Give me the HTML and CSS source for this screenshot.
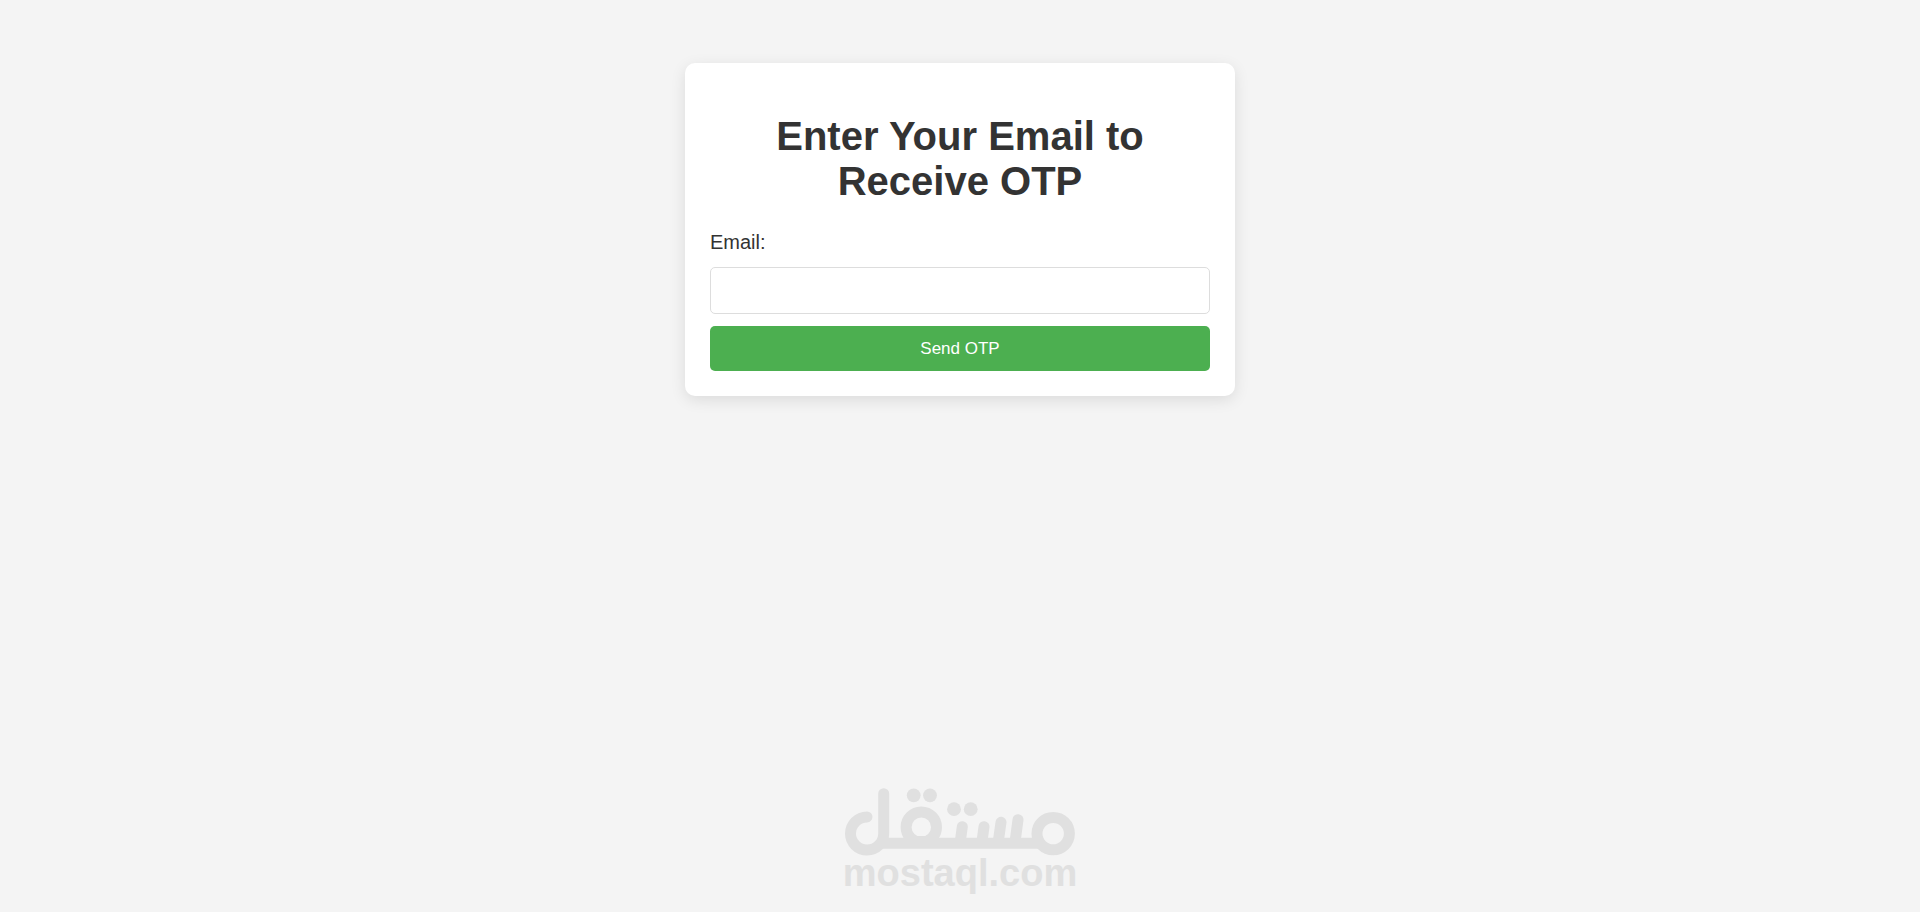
FILE: index.html
```html
<!DOCTYPE html>
<html lang="en">
  <head>
    <meta charset="UTF-8" />
    <meta name="viewport" content="width=device-width, initial-scale=1.0" />
    <title>Send OTP</title>
    <link rel="stylesheet" href="styles.css">
  </head>
  <body>
    <main class="container">
      <h1>Enter Your Email to Receive OTP</h1>
      <form class="otp-form" method="post">
        <label for="email">Email:</label>
        <input type="email" id="email" name="email" required />
        <button type="submit">Send OTP</button>
      </form>
    </main>

    <footer class="brand">
      <svg class="brand-logo" viewBox="0 0 240 114" role="img" aria-label="mostaql.com">
        <g class="logo-strokes">
          <path d="M27 36.900 A16.600 16.600 0 1 0 43.700 53.500 V13.700" />
          <path class="flat" d="M43 63.300 H202" />
          <circle cx="81.300" cy="47.200" r="15.200" />
          <path d="M122.300 46.700 L120.500 60 M144 46.700 L142.200 60 M161 42.300 L158.500 60 M178 39.700 L175.300 60" />
          <circle cx="213.200" cy="53.600" r="16.200" />
        </g>
        <g class="logo-fill">
          <path d="M61 47 L64 58 H98.500 L101.500 47 L93 56 H69 Z" />
          <circle cx="73.700" cy="15.300" r="6.900" />
          <circle cx="90" cy="15.300" r="6.900" />
          <circle cx="114" cy="29.200" r="6.900" />
          <circle cx="130.700" cy="29.200" r="6.900" />
          <text x="120" y="106" text-anchor="middle">mostaql.com</text>
        </g>
      </svg>
    </footer>
  </body>
</html>
```

FILE: styles.css
```css
* {
  box-sizing: border-box;
}

body {
  margin: 0;
  min-height: 100vh;
  display: flex;
  flex-direction: column;
  align-items: center;
  padding: 63px 20px 18px;
  font-family: Arial, "Liberation Sans", sans-serif;
  background-color: #f4f4f4;
  color: #333;
}

.container {
  width: 100%;
  max-width: 550px;
  padding: 25px;
  background-color: #fff;
  border-radius: 10px;
  box-shadow: 0 4px 15px rgba(0, 0, 0, 0.1);
}

h1 {
  margin: 26px 0;
  font-size: 40px;
  line-height: 45px;
  text-align: center;
}

/* Form */
.otp-form {
  display: flex;
  flex-direction: column;
}

label {
  margin-bottom: 12px;
  font-size: 20px;
  line-height: 25px;
}

input {
  width: 100%;
  height: 47px;
  margin-bottom: 12px;
  padding: 12px;
  border: 1px solid #ddd;
  border-radius: 5px;
  font-family: inherit;
  font-size: 17px;
}

button {
  height: 45px;
  padding: 12px;
  border: none;
  border-radius: 5px;
  background-color: #4caf50;
  color: #fff;
  font-family: inherit;
  font-size: 17px;
  line-height: 20px;
  cursor: pointer;
}

button:hover {
  background-color: #45a049;
}

/* Brand mark */
.brand {
  margin-top: auto;
}

.brand-logo {
  display: block;
  width: 240px;
}

.logo-strokes {
  fill: none;
  stroke: #e0e0e0;
  stroke-width: 11;
  stroke-linecap: round;
}

.logo-strokes .flat {
  stroke-linecap: butt;
}

.logo-fill {
  fill: #e0e0e0;
  font-size: 38px;
  font-weight: bold;
}
```
